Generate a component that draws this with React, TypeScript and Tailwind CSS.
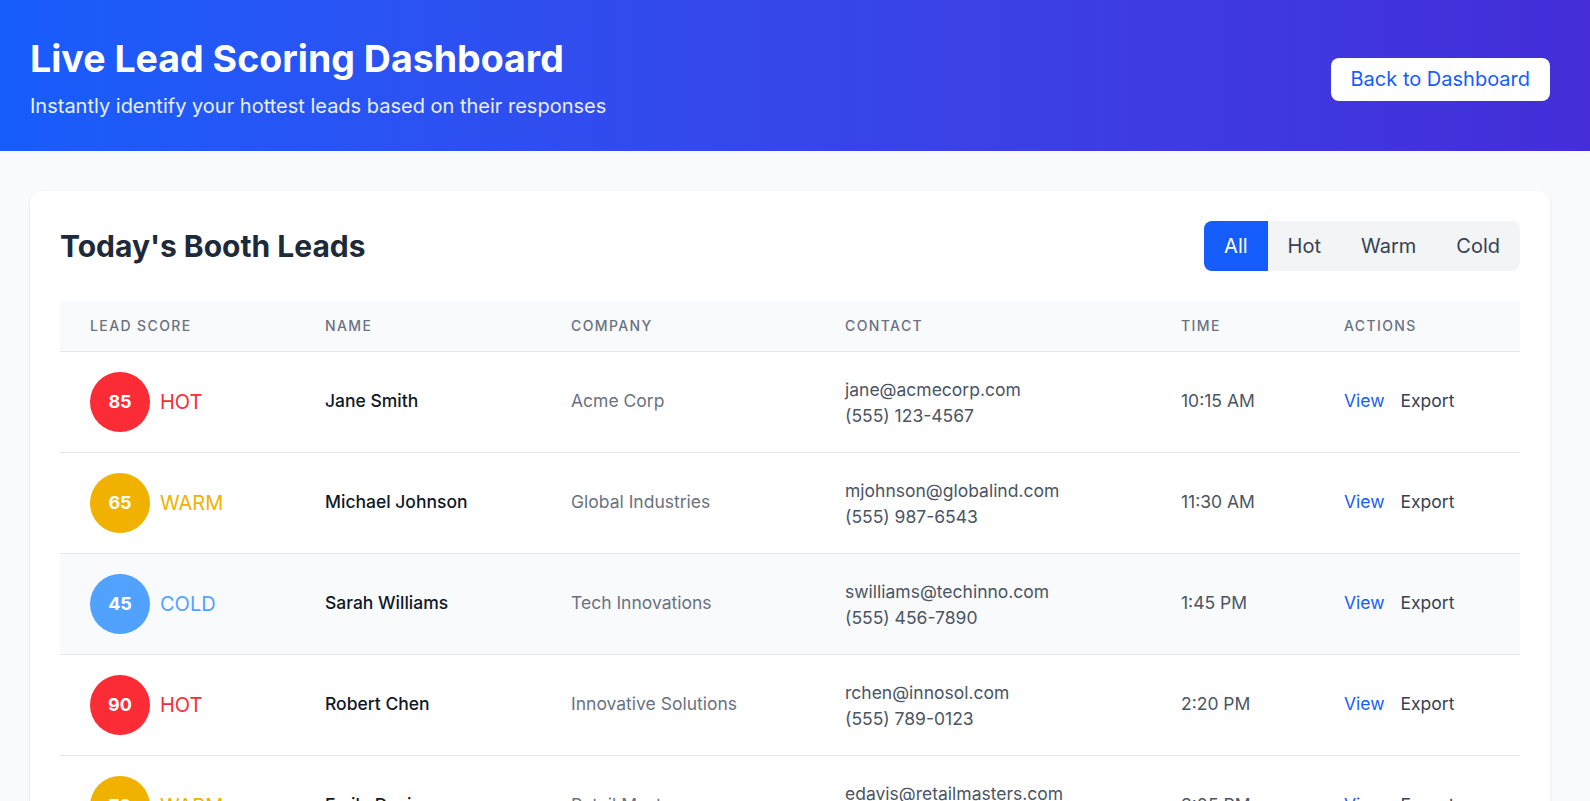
import React, { useState } from 'react';

type Level = 'HOT' | 'WARM' | 'COLD';

interface Lead {
  score: number;
  level: Level;
  name: string;
  company: string;
  email: string;
  phone: string;
  time: string;
}

const leads: Lead[] = [
  { score: 85, level: 'HOT', name: 'Jane Smith', company: 'Acme Corp', email: 'jane@acmecorp.com', phone: '(555) 123-4567', time: '10:15 AM' },
  { score: 65, level: 'WARM', name: 'Michael Johnson', company: 'Global Industries', email: 'mjohnson@globalind.com', phone: '(555) 987-6543', time: '11:30 AM' },
  { score: 45, level: 'COLD', name: 'Sarah Williams', company: 'Tech Innovations', email: 'swilliams@techinno.com', phone: '(555) 456-7890', time: '1:45 PM' },
  { score: 90, level: 'HOT', name: 'Robert Chen', company: 'Innovative Solutions', email: 'rchen@innosol.com', phone: '(555) 789-0123', time: '2:20 PM' },
  { score: 70, level: 'WARM', name: 'Emily Davis', company: 'Retail Masters', email: 'edavis@retailmasters.com', phone: '(555) 234-5678', time: '3:05 PM' },
];

const circleColor: Record<Level, string> = {
  HOT: 'bg-red-500',
  WARM: 'bg-yellow-500',
  COLD: 'bg-blue-400',
};

const labelColor: Record<Level, string> = {
  HOT: 'text-red-500',
  WARM: 'text-yellow-500',
  COLD: 'text-blue-400',
};

const filters = ['All', 'Hot', 'Warm', 'Cold'];

const th = 'pl-[30px] text-sm font-medium uppercase tracking-widest text-gray-500';

const App: React.FC = () => {
  const [filter, setFilter] = useState('All');

  const visible = leads.filter(l => filter === 'All' || l.level === filter.toUpperCase());

  return (
    <div className="min-h-screen bg-gray-50 font-['Inter',sans-serif]">
      <header className="bg-linear-to-r from-blue-600 to-indigo-700 text-white pl-[30px] pr-[40px] h-[151px] flex items-center justify-between">
        <div className="mt-[4px]">
          <h1 className="text-[37.5px] font-bold leading-[48px]">Live Lead Scoring Dashboard</h1>
          <p className="text-xl text-white/90 mt-[9px]">Instantly identify your hottest leads based on their responses</p>
        </div>
        <button className="bg-white text-blue-600 text-xl px-5 h-[43px] rounded-lg mt-[7px]">
          Back to Dashboard
        </button>
      </header>

      <main className="pl-[30px] pr-[40px] pt-10">
        <div className="bg-white rounded-xl shadow-sm p-[30px]">
          <div className="flex items-center justify-between mb-[30px]">
            <h2 className="text-3xl font-bold text-gray-800">Today's Booth Leads</h2>
            <div className="flex bg-gray-100 rounded-lg overflow-hidden">
              {filters.map(f => (
                <button
                  key={f}
                  onClick={() => setFilter(f)}
                  className={
                    f === filter
                      ? 'px-5 h-[50px] text-xl bg-blue-600 text-white'
                      : 'px-5 h-[50px] text-xl text-gray-700'
                  }
                >
                  {f}
                </button>
              ))}
            </div>
          </div>

          <table className="w-full table-fixed text-left">
            <thead className="bg-gray-50">
              <tr className="border-b border-gray-200">
                <th className={`w-[235px] h-[50px] ${th}`}>Lead Score</th>
                <th className={`w-[246px] ${th}`}>Name</th>
                <th className={`w-[274px] ${th}`}>Company</th>
                <th className={`w-[336px] ${th}`}>Contact</th>
                <th className={`w-[163px] ${th}`}>Time</th>
                <th className={th}>Actions</th>
              </tr>
            </thead>
            <tbody>
              {visible.map(lead => (
                <tr
                  key={lead.email}
                  className={lead.name === 'Sarah Williams' ? 'border-b border-gray-200 bg-gray-50' : 'border-b border-gray-200 hover:bg-gray-50'}
                >
                  <td className="pl-[30px] py-5">
                    <div className="flex items-center gap-[10px]">
                      <div className={`w-[60px] h-[60px] rounded-full flex items-center justify-center text-white font-bold text-lg ${circleColor[lead.level]}`}>
                        {lead.score}
                      </div>
                      <span className={`text-xl ${labelColor[lead.level]}`}>{lead.level}</span>
                    </div>
                  </td>
                  <td className="pl-[30px] text-[17.5px] font-medium text-gray-900">{lead.name}</td>
                  <td className="pl-[30px] text-[17.5px] text-gray-500">{lead.company}</td>
                  <td className="pl-[30px] pt-[2px] text-[17.5px] text-gray-600 leading-[26px]">
                    <div>{lead.email}</div>
                    <div>{lead.phone}</div>
                  </td>
                  <td className="pl-[30px] text-[17.5px] text-gray-600">{lead.time}</td>
                  <td className="pl-[30px] text-[17.5px]">
                    <button className="text-blue-600 mr-4">View</button>
                    <button className="text-gray-700">Export</button>
                  </td>
                </tr>
              ))}
            </tbody>
          </table>
        </div>
      </main>
    </div>
  );
};

export default App;
